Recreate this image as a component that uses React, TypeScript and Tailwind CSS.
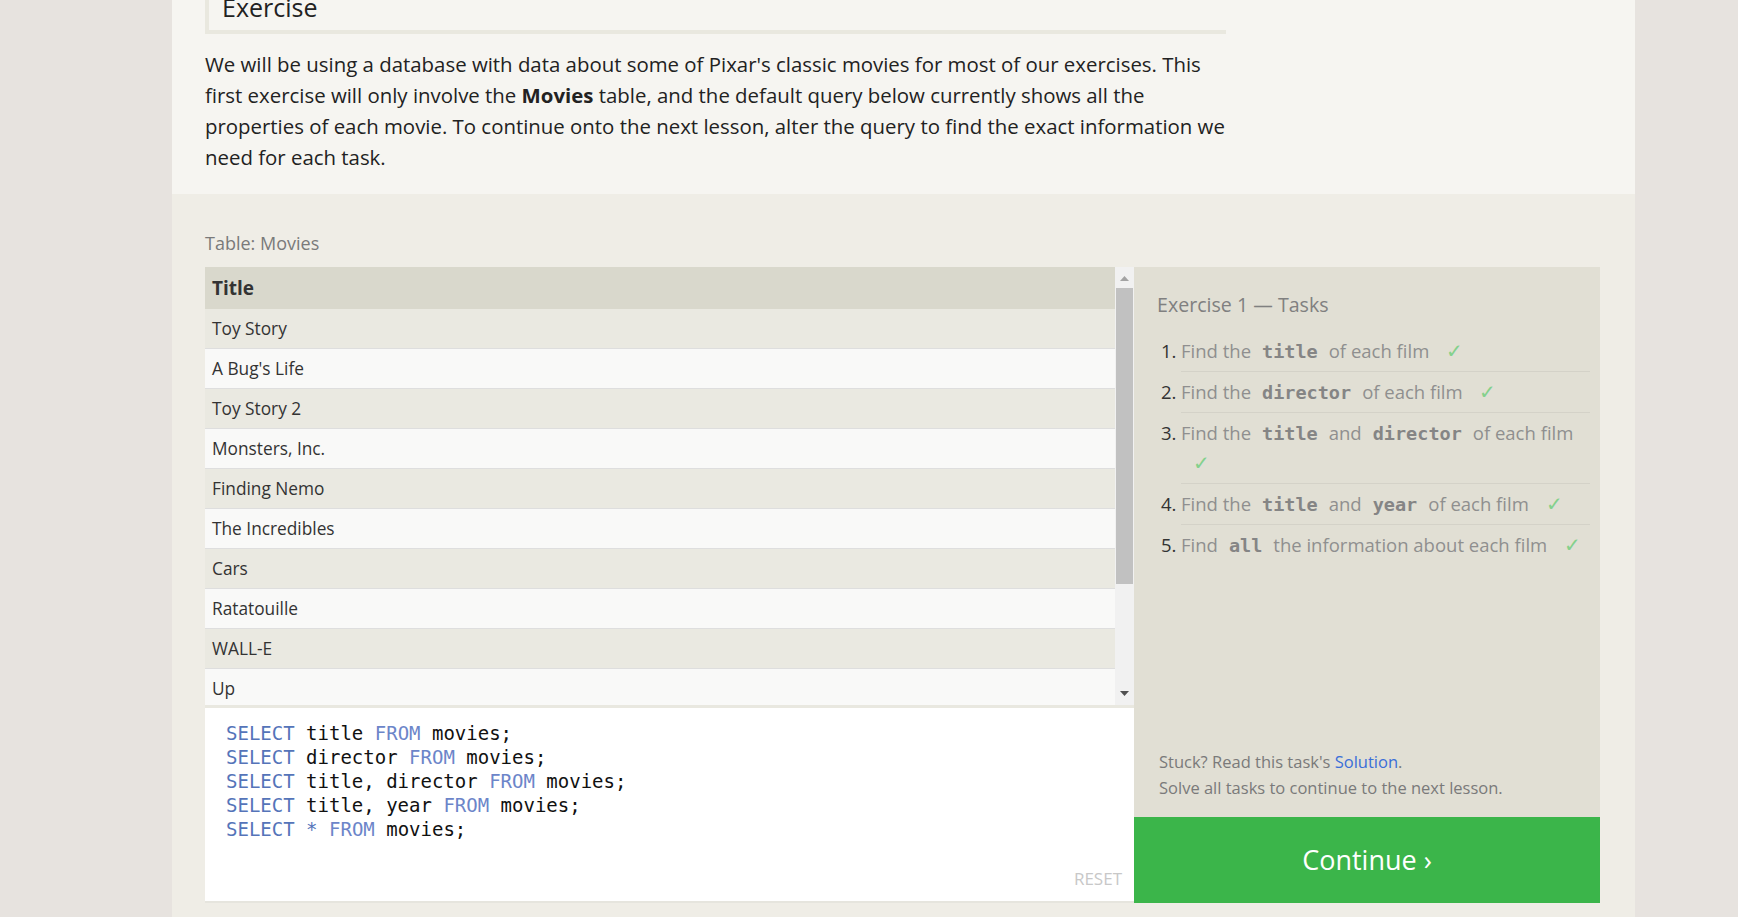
import React from "react";

const movies = [
  "Toy Story",
  "A Bug's Life",
  "Toy Story 2",
  "Monsters, Inc.",
  "Finding Nemo",
  "The Incredibles",
  "Cars",
  "Ratatouille",
  "WALL-E",
  "Up",
];

const sans = { fontFamily: "'Open Sans', 'Noto Sans', sans-serif" };
const mono = { fontFamily: "'DejaVu Sans Mono', 'Liberation Mono', monospace" };

function Code({ children }: { children: React.ReactNode }) {
  return (
    <code className="mx-[11px] font-bold text-[#858585] text-[18.5px] leading-none" style={mono}>
      {children}
    </code>
  );
}

function Check() {
  return <span className="ml-[12px] text-[#84d18c] text-[20px] leading-none">✓</span>;
}

const tasks: React.ReactNode[] = [
  <>Find the<Code>title</Code>of each film <Check /></>,
  <>Find the<Code>director</Code>of each film <Check /></>,
  <>Find the<Code>title</Code>and<Code>director</Code>of each film <Check /></>,
  <>Find the<Code>title</Code>and<Code>year</Code>of each film <Check /></>,
  <>Find<Code>all</Code>the information about each film <Check /></>,
];

const queries: [string, string][] = [
  ["title", "movies;"],
  ["director", "movies;"],
  ["title, director", "movies;"],
  ["title, year", "movies;"],
  ["*", "movies;"],
];

export default function App() {
  return (
    <div className="min-h-[917px] bg-[#e7e3df] overflow-hidden" style={sans}>
      <div className="ml-[172px] w-[1463px] bg-[#efede6] min-h-[917px]">
        {/* Intro */}
        <section className="bg-[#f6f5f1] h-[194px] px-[33px] overflow-hidden">
          <div className="w-[1021px] -mt-[14px] border-l-4 border-b-4 border-[#e9e8df] pl-[13px] pb-[2px]">
            <h2 className="text-[25px] text-[#222] leading-[42px]">Exercise</h2>
          </div>
          <p className="w-[1030px] mt-[15px] text-[20.4px] leading-[31px] text-[#222]">
            We will be using a database with data about some of Pixar's classic movies for most of our exercises. This
            first exercise will only involve the <b>Movies</b> table, and the default query below currently shows all the
            properties of each movie. To continue onto the next lesson, alter the query to find the exact information we
            need for each task.
          </p>
        </section>

        {/* Exercise area */}
        <section className="px-[33px] pt-[37px]">
          <div className="text-[18px] leading-[24px] text-[#7a7a7a] mb-[12px]">Table: Movies</div>
          <div className="flex w-[1395px]">
            {/* left column */}
            <div className="w-[929px] flex flex-col">
              <div className="flex h-[441px] border-b-[3px] border-[#e9e8e0]">
                <div className="flex-1 overflow-hidden">
                  <div className="h-[42px] bg-[#d9d8cc] flex items-center px-[7px] text-[19px] font-bold text-[#333]">
                    Title
                  </div>
                  {movies.map((m, i) => (
                    <div
                      key={m}
                      className={`h-[40px] border-b border-[#dedede] flex items-center px-[7px] text-[17.3px] text-[#333] ${
                        i % 2 === 0 ? "bg-[#eae9e1]" : "bg-[#f9f9f8]"
                      }`}
                    >
                      {m}
                    </div>
                  ))}
                </div>
                {/* scrollbar */}
                <div className="w-[19px] bg-[#f1f1f1] flex flex-col items-center">
                  <svg width="9" height="5" viewBox="0 0 9 5" className="mt-[9px] mb-[7px]">
                    <path d="M0 5 L4.5 0 L9 5 Z" fill="#a3a3a3" />
                  </svg>
                  <div className="w-[17px] h-[296px] bg-[#c1c1c1]" />
                  <div className="flex-1" />
                  <svg width="9" height="5" viewBox="0 0 9 5" className="mb-[9px]">
                    <path d="M0 0 L9 0 L4.5 5 Z" fill="#505050" />
                  </svg>
                </div>
              </div>
              <div
                className="relative bg-white h-[195px] border-b-2 border-[#e6e5de] pt-[13px] pl-[21px] text-[19px] leading-[24px]"
                style={mono}
              >
                {queries.map(([cols, table], i) => (
                  <div key={i} className="whitespace-pre text-[#111]">
                    <span className="text-[#5574b9]">SELECT</span>{" "}
                    {cols === "*" ? <span className="text-[#5574b9]">*</span> : cols}{" "}
                    <span className="text-[#6c85c9]">FROM</span> {table}
                  </div>
                ))}
                <span className="absolute right-[12px] bottom-[10px] text-[17px] text-[#c8c8c8]" style={sans}>
                  RESET
                </span>
              </div>
            </div>

            {/* right column */}
            <div className="flex-1 flex flex-col bg-[#e1dfd4]">
              <div className="flex-1 pl-[23px] pr-[10px] pt-[23px] flex flex-col">
                <h3 className="text-[19.6px] text-[#808080] mb-[12px]">Exercise 1 — Tasks</h3>
                <ol className="text-[18.5px] text-[#8f8f8f]">
                  {tasks.map((t, i) => (
                    <li key={i} className="flex">
                      <span className="w-[24px] pl-[4px] text-[#333] shrink-0 pt-[5px] leading-[30px]">{i + 1}.</span>
                      <div
                        className={`flex-1 pt-[5px] pb-[5px] leading-[30px] ${
                          i < 4 ? "border-b border-[#d4d2c8]" : ""
                        }`}
                      >
                        {t}
                      </div>
                    </li>
                  ))}
                </ol>
                <div className="flex-1" />
                <div className="text-[16.5px] leading-[25.5px] text-[#7a7a7a] pl-[2px] pb-[17px]">
                  <div>
                    Stuck? Read this task's <span className="text-[#3a6ed8]">Solution</span>.
                  </div>
                  <div>Solve all tasks to continue to the next lesson.</div>
                </div>
              </div>
              <button className="h-[86px] bg-[#3bb54a] text-white text-[27px] flex items-center justify-center">
                Continue ›
              </button>
            </div>
          </div>
        </section>
      </div>
    </div>
  );
}
